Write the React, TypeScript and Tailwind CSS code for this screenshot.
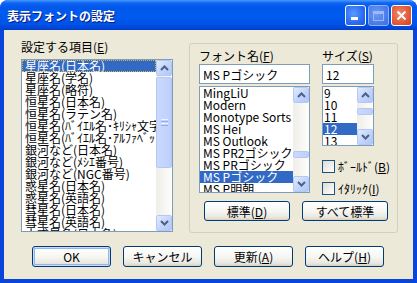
import React from "react";

const Chevron = ({ up }: { up?: boolean }) => (
  <svg width="9" height="6" viewBox="0 0 9 6">
    <path
      d={up ? "M1 5 L4.5 1.5 L8 5" : "M1 1 L4.5 4.5 L8 1"}
      fill="none"
      stroke="#4D6185"
      strokeWidth="2"
    />
  </svg>
);

const ArrowBtn = ({ up }: { up?: boolean }) => (
  <div className="w-[16px] h-[16px] shrink-0 rounded-[2px] border border-[#B4C8F6] bg-[linear-gradient(135deg,#E2EAFE,#C2D4FC_55%,#B1C6F7)] flex items-center justify-center">
    <Chevron up={up} />
  </div>
);

function ScrollBar({ thumbTop, thumbH, grip }: { thumbTop: number; thumbH: number; grip?: boolean }) {
  return (
    <div className="w-[16px] h-full shrink-0 flex flex-col bg-[linear-gradient(to_right,#EFEEE8,#FDFDFB)]">
      <ArrowBtn up />
      <div className="flex-1 flex flex-col">
        <div style={{ height: thumbTop }} />
        <div
          style={{ height: thumbH }}
          className="rounded-[2px] border border-[#B4C8F6] bg-[linear-gradient(to_right,#CBD9FD,#BDCFFB)] flex flex-col items-center justify-center gap-[1px]"
        >
          {grip && (
            <>
              <div className="w-[7px] h-[1px] bg-[#EEF4FE]" />
              <div className="w-[7px] h-[1px] bg-[#8CB0F8]" />
              <div className="w-[7px] h-[1px] bg-[#EEF4FE]" />
              <div className="w-[7px] h-[1px] bg-[#8CB0F8]" />
            </>
          )}
        </div>
      </div>
      <ArrowBtn />
    </div>
  );
}

function Btn({ children, w, h, def }: { children: React.ReactNode; w: string; h: string; def?: boolean }) {
  return (
    <div
      className={`${w} ${h} shrink-0 rounded-[3px] border border-[#003C74] bg-[linear-gradient(180deg,#FFFFFF,#F5F5F1_55%,#E8E7E0_85%,#D6D0C5)] flex items-center justify-center text-[12px] leading-[13px] text-black ${
        def ? "shadow-[inset_0_0_0_1px_#CADAF8,inset_0_0_0_2px_#94B4EA]" : ""
      }`}
    >
      {children}
    </div>
  );
}

const leftItems = [
  "星座名(日本名)",
  "星座名(学名)",
  "星座名(略符)",
  "恒星名(日本名)",
  "恒星名(ラテン名)",
  "恒星名(ﾊﾞｲｴﾙ名･ｷﾘｼｬ文字)",
  "恒星名(ﾊﾞｲｴﾙ名･ｱﾙﾌｧﾍﾞｯﾄ)",
  "銀河など(日本名)",
  "銀河など(ﾒｼｴ番号)",
  "銀河など(NGC番号)",
  "惑星名(日本名)",
  "惑星名(英語名)",
  "彗星名(日本名)",
  "彗星名(英語名)",
  "小惑星名(日本名)",
];

const fontItems = [
  "MingLiU",
  "Modern",
  "Monotype Sorts",
  "MS Hei",
  "MS Outlook",
  "MS PR2ゴシック",
  "MS PRゴシック",
  "MS Pゴシック",
  "MS P明朝",
];

const sizeItems = ["9", "10", "11", "12", "13"];

export default function App() {
  return (
    <div className="w-[417px] h-[283px] flex flex-col bg-[#0A45DA] rounded-t-[8px] overflow-hidden font-['Noto_Sans_CJK_JP',sans-serif] text-black select-none">
      {/* Title bar */}
      <div className="h-[30px] shrink-0 flex items-start bg-[linear-gradient(180deg,#4A9BFF_0px,#0D63F2_3px,#0057EC_8px,#005AEF_16px,#0052E6_24px,#0046D8_28px,#003CCB_30px)]">
        <div className="pl-[7px] h-[30px] flex items-center text-white text-[12px] font-bold leading-[13px] [text-shadow:1px_1px_#0A1A7A] flex-1">
          表示フォントの設定
        </div>
        <div className="flex gap-[2px] mt-[5px] mr-[5px]">
          <div className="w-[21px] h-[21px] rounded-[3px] border border-white bg-[radial-gradient(circle_at_40%_40%,#5C9BFF,#2A6CF3_60%,#1C58E0)] flex items-end justify-start pl-[5px] pb-[5px]">
            <div className="w-[7px] h-[3px] bg-white" />
          </div>
          <div className="w-[21px] h-[21px] rounded-[3px] border border-[#8FB0F2] bg-[radial-gradient(circle_at_40%_40%,#6E9BF4,#4C7DEB_60%,#3E6EE2)] flex items-center justify-center">
            <div className="w-[11px] h-[10px] border border-[#9DB8F2] border-t-[3px]" />
          </div>
          <div className="w-[21px] h-[21px] rounded-[3px] border border-white bg-[radial-gradient(circle_at_40%_40%,#F0866A,#E25A37_60%,#C8411E)] flex items-center justify-center">
            <svg width="11" height="11" viewBox="0 0 11 11">
              <path d="M1.5 1.5 L9.5 9.5 M9.5 1.5 L1.5 9.5" stroke="white" strokeWidth="2" />
            </svg>
          </div>
        </div>
      </div>

      {/* Body */}
      <div className="mx-[4px] mb-[4px] flex-1 bg-[#ECE9D8] flex flex-col">
        <div className="flex pl-[17px] pt-[10px]">
          {/* Left column */}
          <div className="w-[152px] flex flex-col">
            <div className="h-[13px] text-[12px] leading-[13px] whitespace-nowrap">
              設定する項目(<span className="underline underline-offset-1">E</span>)
            </div>
            <div className="mt-[6px] h-[173px] border border-[#7F9DB9] bg-white flex">
              <div className="flex-1 overflow-hidden">
                {leftItems.map((t, i) => (
                  <div
                    key={t}
                    className={`h-[12px] pl-[3px] text-[12px] leading-[12px] whitespace-nowrap ${
                      i === 0 ? "bg-[#316AC5] text-white outline-1 outline-dotted outline-[#E8B040] -outline-offset-1" : ""
                    }`}
                  >
                    {t}
                  </div>
                ))}
              </div>
              <ScrollBar thumbTop={1} thumbH={91} grip />
            </div>
          </div>

          {/* Group box */}
          <div className="ml-[16px] mt-[3px] w-[209px] h-[190px] border border-[#D0D0BF] rounded-[3px] flex flex-col pt-[5px]">
            <div className="flex pl-[9px] gap-[12px]">
              {/* Font column */}
              <div className="w-[111px] flex flex-col">
                <div className="h-[13px] text-[12px] leading-[13px] whitespace-nowrap">
                  フォント名(<span className="underline underline-offset-1">F</span>)
                </div>
                <div className="mt-[2px] h-[20px] border border-[#7F9DB9] bg-white flex items-center pl-[3px] text-[12px] leading-[13px] whitespace-nowrap">
                  MS Pゴシック
                </div>
                <div className="mt-[2px] h-[107px] border border-[#7F9DB9] bg-white flex">
                  <div className="flex-1 overflow-hidden">
                    {fontItems.map((t, i) => (
                      <div
                        key={t}
                        className={`h-[12px] pl-[3px] text-[12px] leading-[12px] whitespace-nowrap ${
                          i === 7 ? "bg-[#316AC5] text-white" : ""
                        }`}
                      >
                        {t}
                      </div>
                    ))}
                  </div>
                  <ScrollBar thumbTop={48} thumbH={7} />
                </div>
              </div>

              {/* Size column */}
              <div className="w-[52px] flex flex-col">
                <div className="h-[13px] text-[12px] leading-[13px] whitespace-nowrap">
                  サイズ(<span className="underline underline-offset-1">S</span>)
                </div>
                <div className="mt-[2px] h-[20px] border border-[#7F9DB9] bg-white flex items-center pl-[3px] text-[12px] leading-[13px]">
                  12
                </div>
                <div className="mt-[2px] h-[60px] border border-[#7F9DB9] bg-white flex">
                  <div className="flex-1 overflow-hidden">
                    {sizeItems.map((t, i) => (
                      <div
                        key={t}
                        className={`h-[12px] pl-[1px] text-[12px] leading-[12px] whitespace-nowrap ${
                          i === 3 ? "bg-[#316AC5] text-white" : ""
                        }`}
                      >
                        {t}
                      </div>
                    ))}
                  </div>
                  <ScrollBar thumbTop={5} thumbH={7} />
                </div>
                <div className="mt-[14px] h-[13px] flex items-center gap-[3px]">
                  <div className="w-[13px] h-[13px] shrink-0 border border-[#1C5180] bg-[linear-gradient(135deg,#DCDCD5,#FFFFFF)]" />
                  <span className="whitespace-nowrap text-[12px] leading-[13px]">
                    ﾎﾞｰﾙﾄﾞ(<span className="underline underline-offset-1">B</span>)
                  </span>
                </div>
                <div className="mt-[9px] h-[13px] flex items-center gap-[3px]">
                  <div className="w-[13px] h-[13px] shrink-0 border border-[#1C5180] bg-[linear-gradient(135deg,#DCDCD5,#FFFFFF)]" />
                  <span className="whitespace-nowrap text-[12px] leading-[13px]">
                    ｲﾀﾘｯｸ(<span className="underline underline-offset-1">I</span>)
                  </span>
                </div>
              </div>
            </div>

            <div className="mt-[6px] pl-[14px] flex gap-[12px]">
              <Btn w="w-[86px]" h="h-[20px]">
                標準(<span className="underline underline-offset-1">D</span>)
              </Btn>
              <Btn w="w-[86px]" h="h-[20px]">
                すべて標準
              </Btn>
            </div>
          </div>
        </div>

        {/* Bottom buttons */}
        <div className="mt-[13px] pl-[28px] flex gap-[12px]">
          <Btn w="w-[79px]" h="h-[21px]" def>
            OK
          </Btn>
          <Btn w="w-[79px]" h="h-[21px]">
            キャンセル
          </Btn>
          <Btn w="w-[79px]" h="h-[21px]">
            更新(<span className="underline underline-offset-1">A</span>)
          </Btn>
          <Btn w="w-[79px]" h="h-[21px]">
            ヘルプ(<span className="underline underline-offset-1">H</span>)
          </Btn>
        </div>
      </div>
    </div>
  );
}
